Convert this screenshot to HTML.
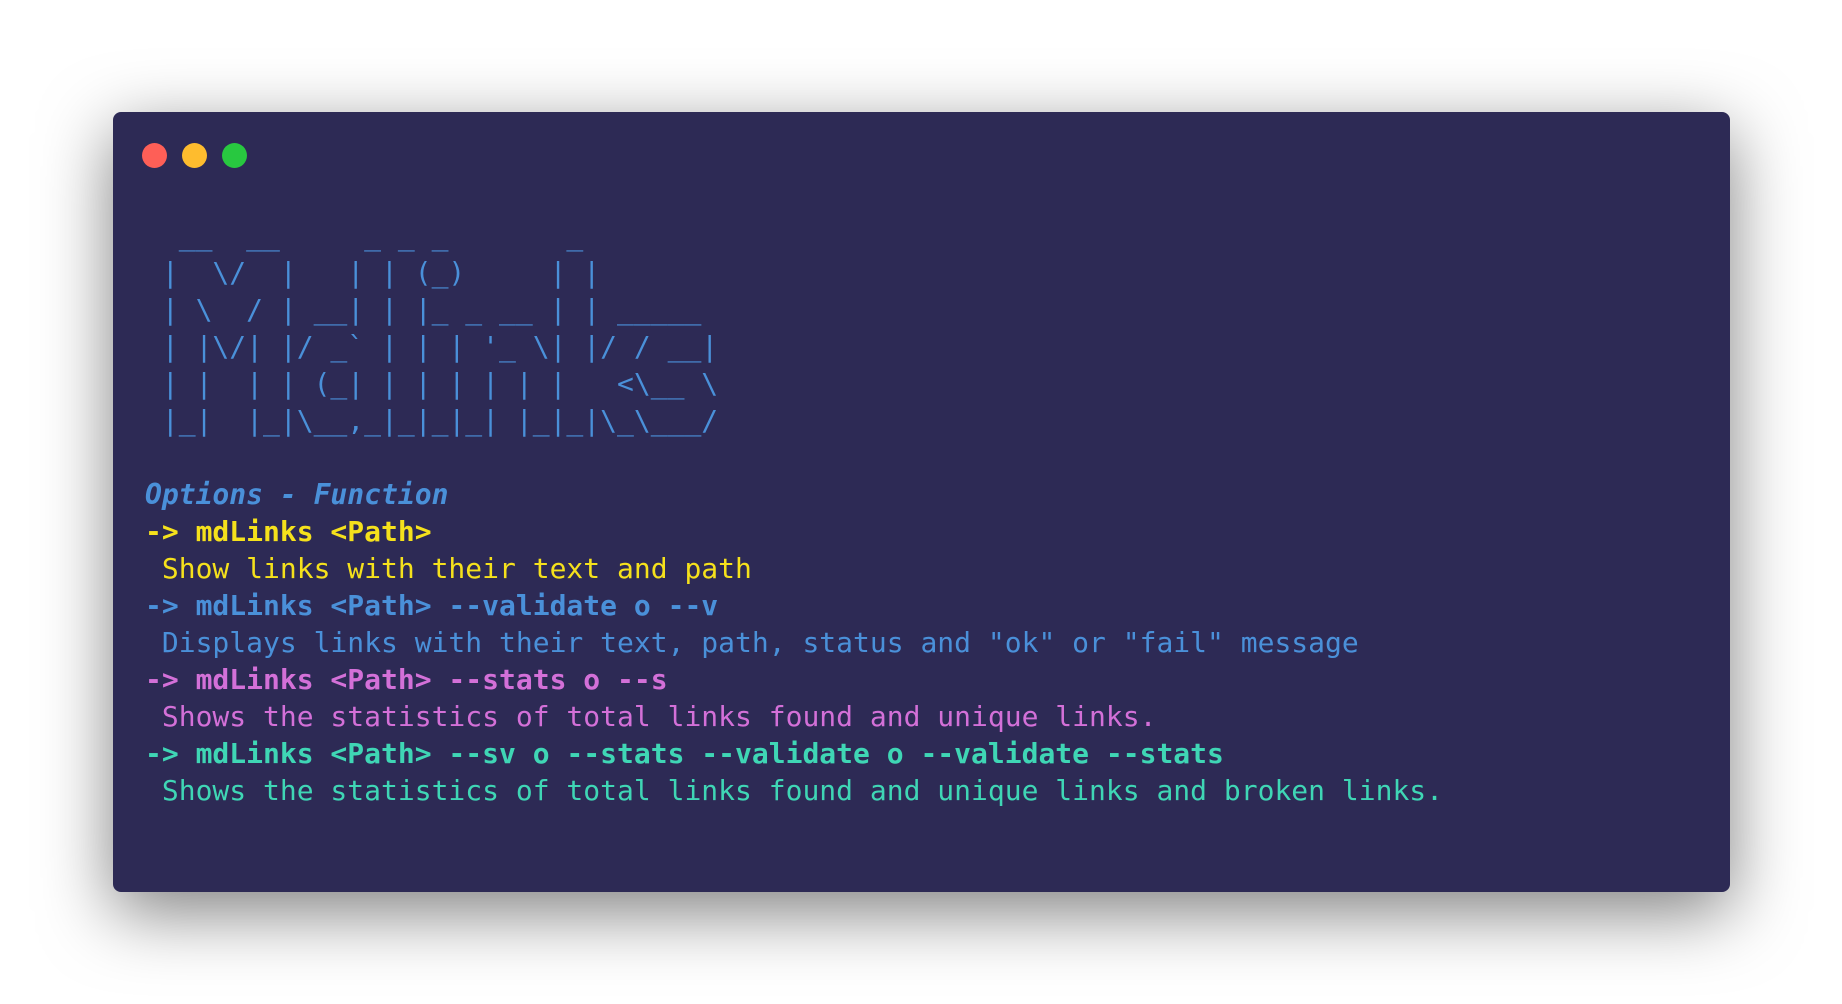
<!DOCTYPE html>
<html><head><meta charset="utf-8"><style>
html,body{margin:0;padding:0;width:1842px;height:1004px;background:#fff;overflow:hidden}
.win{position:absolute;left:113px;top:112px;width:1617px;height:780px;background:#2d2a55;border-radius:8px;box-shadow:0 20px 70px rgba(0,0,0,0.5)}
.dot{position:absolute;top:143px;width:25px;height:25px;border-radius:50%}
pre{position:absolute;left:145px;top:217px;margin:0;font-family:"DejaVu Sans Mono","Liberation Mono",monospace;font-size:28px;line-height:37px;color:#4a90d9;white-space:pre}
.b{font-weight:bold}
.y{color:#f5e11c}.bl{color:#4a90d9}.p{color:#d370d8}.t{color:#3fd6b5}
.o{font-style:italic;font-weight:bold;color:#4a90d9}
</style></head><body>
<div class="win"></div>
<div class="dot" style="left:142px;background:#fe5f57"></div>
<div class="dot" style="left:182px;background:#febc2e"></div>
<div class="dot" style="left:222px;background:#28c840"></div>
<pre>  __  __     _ _ _       _
 |  \/  |   | | (_)     | |
 | \  / | __| | |_ _ __ | | _____
 | |\/| |/ _` | | | '_ \| |/ / __|
 | |  | | (_| | | | | | |   &lt;\__ \
 |_|  |_|\__,_|_|_|_| |_|_|\_\___/

<span class="o">Options - Function</span>
<span class="b y">-&gt; mdLinks &lt;Path&gt;</span>
<span class="y"> Show links with their text and path</span>
<span class="b bl">-&gt; mdLinks &lt;Path&gt; --validate o --v</span>
<span class="bl"> Displays links with their text, path, status and "ok" or "fail" message</span>
<span class="b p">-&gt; mdLinks &lt;Path&gt; --stats o --s</span>
<span class="p"> Shows the statistics of total links found and unique links.</span>
<span class="b t">-&gt; mdLinks &lt;Path&gt; --sv o --stats --validate o --validate --stats</span>
<span class="t"> Shows the statistics of total links found and unique links and broken links.</span></pre>
</body></html>
